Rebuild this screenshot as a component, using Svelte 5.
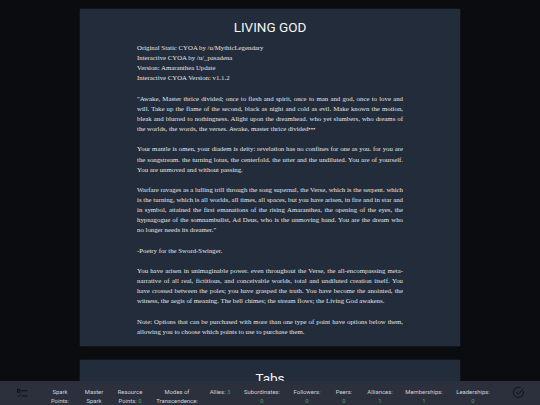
<script>
  const stats = [
    { label: ['Spark', 'Points:'], w: 34 },
    { label: ['Master', 'Spark'], w: 34 },
    { label: ['Resource', 'Points:'], value: '0', inline: true, w: 38 },
    { label: ['Modes of', 'Transcendence:'], w: 56 },
    { label: ['Allies:'], value: '3', inline: true, w: 30 },
    { label: ['Subordinates:'], value: '0', w: 54 },
    { label: ['Followers:'], value: '0', w: 36 },
    { label: ['Peers:'], value: '0', w: 38 },
    { label: ['Alliances:'], value: '1', w: 34 },
    { label: ['Memberships:'], value: '1', w: 54 },
    { label: ['Leaderships:'], value: '0', w: 44 }
  ];
</script>

<div class="page">
  <section class="card">
    <h1>LIVING GOD</h1>
    <div class="copy">
      <p>Original Static CYOA by /u/MythicLegendary<br />Interactive CYOA by /u/_pasadena<br />Version: Amaranthea Update<br />Interactive CYOA Version: v1.1.2</p>
      <p class="just">"Awake, Master thrice divided; once to flesh and spirit, once to man and god, once to love and will. Take up the flame of the second, black as night and cold as evil. Make known the motion, bleak and blurred to nothingness. Alight upon the dreamhead. who yet slumbers, who dreams of the worlds, the words, the verses. Awake, master thrice divided•••</p>
      <p class="just">Your mantle is omen, your diadem is deity: revelation has no confines for one as you. for you are the songstream. the turning lotus, the centerfold. the utter and the undiluted. You are of yourself. You are unmoved and without passing.</p>
      <p class="just">Warfare ravages as a lulling trill through the song supernal, the Verse, which is the serpent. which is the turning, which is all worlds, all times, all spaces, but you have arisen, in fire and in star and in symbol, attained the first emanations of the rising Amaranthea, the opening of the eyes, the hypnagogue of the somnambulist, Ad Deus, who is the unmoving hand. You are the dream who no longer needs its dreamer."</p>
      <p>-Poetry for the Sword-Swinger.</p>
      <p class="just">You have arisen in unimaginable power. even throughout the Verse, the all-encompassing meta-narrative of all real, fictitious, and conceivable worlds, total and undiluted creation itself. You have crossed between the poles; you have grasped the truth. You have become the anointed, the witness, the aegis of meaning. The bell chimes; the stream flows; the Living God awakens.</p>
      <p class="just">Note: Options that can be purchased with more than one type of point have options below them, allowing you to choose which points to use to purchase them.</p>
    </div>
  </section>
  <section class="card second">
    <h2>Tabs</h2>
  </section>
</div>

<footer class="bar">
  <svg class="icon list" viewBox="0 0 11 9" width="11" height="9" aria-hidden="true">
    <rect x="0.5" y="0.5" width="2.4" height="2.6" />
    <path d="M4.5 1.8h6M4.5 7h6" />
    <path d="M0.4 6.8l1 1 1.8-2.2" />
  </svg>
  <div class="stats">
    {#each stats as s}
      <div class="stat" style="width:{s.w}px">
        {#each s.label as line, i}
          <div>{line}{#if s.inline && i === s.label.length - 1}&nbsp;<span class="val">{s.value}</span>{/if}</div>
        {/each}
        {#if s.value && !s.inline}<div class="val">{s.value}</div>{/if}
      </div>
    {/each}
  </div>
  <svg class="icon check" viewBox="0 0 14 14" width="13" height="13" aria-hidden="true">
    <path d="M12.2 5.4A5.5 5.5 0 1 1 9.4 2" />
    <path d="M4.6 6.6l2.2 2.3 5.4-6" />
  </svg>
</footer>

<style>
  :global(body) {
    margin: 0;
    background: #0b0c0f;
    height: 405px;
    overflow: hidden;
  }
  .page {
    width: 380px;
    margin: 0 auto;
    padding-top: 9px;
    display: flex;
    flex-direction: column;
    gap: 14px;
  }
  .card {
    background: #222c3a;
    height: 337px;
    box-sizing: border-box;
    padding-top: 8px;
    color: #e6e8ea;
    box-shadow: 0 0 2px rgba(60, 70, 85, 0.5);
  }
  .second {
    height: 60px;
  }
  h1, h2 {
    margin: 0;
    text-align: center;
    font-family: Roboto, "Noto Sans", sans-serif;
    font-weight: 400;
    color: #f4f5f6;
    font-size: 13.5px;
    line-height: 20px;
  }
  .copy {
    width: 266px;
    margin: 6px auto 0;
    font-family: "Liberation Serif", serif;
    font-size: 6.8px;
    line-height: 10.14px;
    color: #e2e4e8;
  }
  p {
    margin: 0 0 10.14px;
  }
  .just {
    text-align: justify;
    hyphens: manual;
  }
  .bar {
    position: fixed;
    left: 0;
    right: 0;
    bottom: 0;
    height: 24px;
    background: #2b303c;
    display: flex;
    align-items: flex-start;
    box-sizing: border-box;
    padding-left: 17px;
    overflow: hidden;
  }
  .icon {
    flex: none;
    margin-top: 5px;
    fill: none;
    stroke: #0d0f13;
    stroke-width: 1;
  }
  .list {
    margin-top: 8px;
  }
  .stats {
    display: flex;
    margin-left: 15px;
    padding-top: 7px;
  }
  .stat {
    font-family: Roboto, sans-serif;
    font-size: 5.9px;
    line-height: 9px;
    color: #cfd2d6;
    text-align: center;
    white-space: nowrap;
  }
  .val {
    color: #45a855;
  }
  .check {
    margin-left: 16.5px;
  }
</style>
